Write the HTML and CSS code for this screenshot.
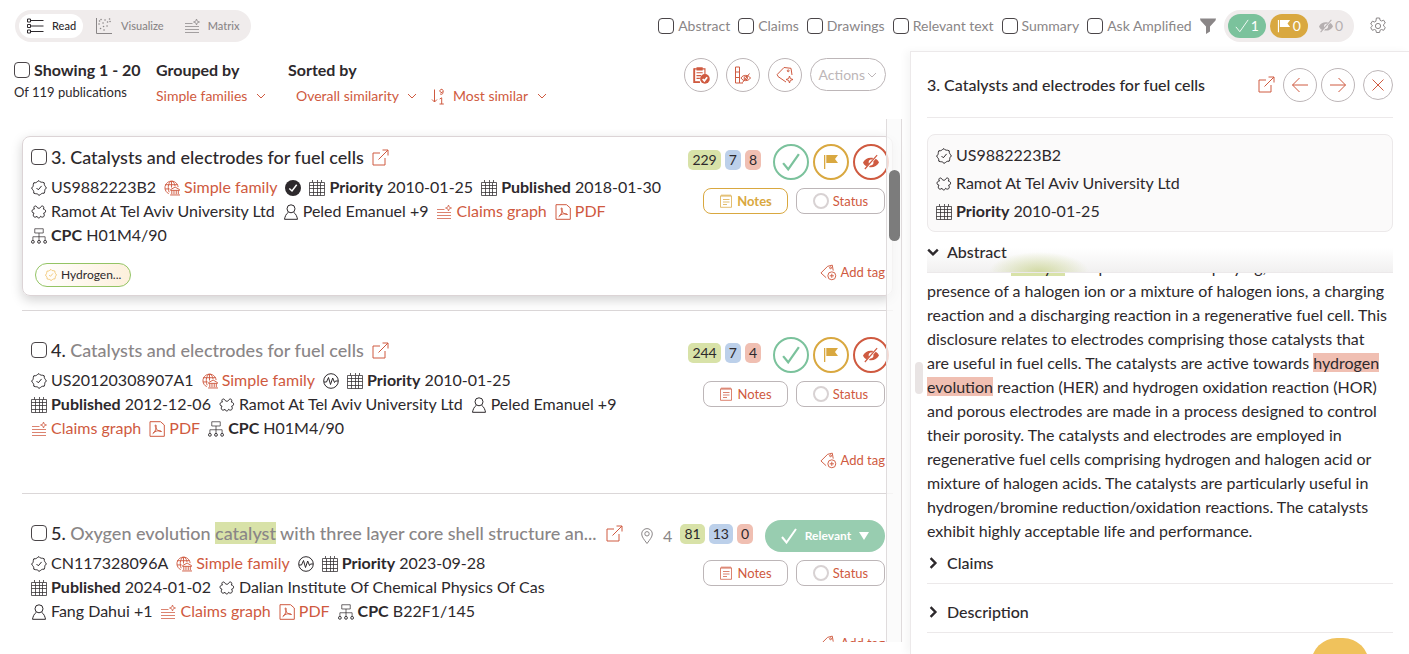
FILE: index.html
```html
<!DOCTYPE html>
<html lang="en">
<head>
    <meta charset="UTF-8">
    <meta name="viewport" content="width=device-width, initial-scale=1.0">
    <title>Publications</title>
    <link rel="stylesheet" href="styles.css">
</head>
<body>
    <!-- Icon sprite -->
    <svg class="sprite" aria-hidden="true">
        <symbol id="i-list" viewBox="0 0 18 18"><path d="M1.5 2h3v3h-3zM1.5 7.5h3v3h-3zM1.5 13h3v3h-3zM4.500 3.500H17.500M4.500 9H17.500M4.500 14.500H17.500"/></symbol>
        <symbol id="i-scatter" viewBox="0 0 18 18"><path d="M1.500 1V16.500H17"/><path class="dots" d="M6 2.500h.1M10 3h.1M14.500 2h.1M4 7h.1M8 6h.1M12.500 5h.1M5.500 11.500h.1M8.500 9.500h.1M12 9h.1M9 13h.1M15 4.500h.1M4.500 4h.1"/></symbol>
        <symbol id="i-matrix" viewBox="0 0 16 16"><path class="thin" d="M1 5.500H8.500M1 8.500H15M1 11.500H15M1 14.500H15M12.500 1L13.300 3.200L15.500 4L13.300 4.800L12.500 7L11.700 4.800L9.500 4L11.700 3.200Z"/></symbol>
        <symbol id="i-funnel" viewBox="0 0 16 16"><path class="solid" d="M0 .5H16L15.500 2.500L10 8.500V13.500L6 16V8.500L.5 2.500Z"/></symbol>
        <symbol id="i-check" viewBox="0 0 16 16"><path d="M1 9L5.500 14.500L15 1"/></symbol>
        <symbol id="i-flag" viewBox="0 0 16 16"><path class="solid" d="M1 1h1.300v14H1zM3.300 1H15L12 5L15 9H3.300z"/></symbol>
        <symbol id="i-hide" viewBox="0 0 16 16"><path class="solid" d="M0 8.500C2 4.500 6 3 10.300 4L9 5.500C6.500 4.800 5 7.500 6 9.300L3.300 12.300C1.800 11.500.7 10.200 0 8.500ZM12.700 4.700C14.200 5.500 15.300 6.800 16 8.500C14 12.200 10 14 5.800 13L7.200 11.400C9.700 11.800 11 9.500 10.300 7.500ZM13.700.7L14.600 1.500L2.300 15.400L1.400 14.600Z"/></symbol>
        <symbol id="i-gear" viewBox="0 0 18 18"><path d="M7.400 1h3.200l.5 2.300 1.300.7 2.300-.8 1.600 2.800-1.700 1.500v1.500l1.700 1.500-1.600 2.800-2.300-.8-1.300.7-.5 2.300H7.400l-.5-2.300-1.300-.7-2.300.8-1.600-2.800 1.700-1.500V8.500L1.700 7l1.600-2.800 2.300.8 1.300-.8z"/><circle cx="9" cy="9" r="2.600"/></symbol>
        <symbol id="i-clip" viewBox="0 0 16 16"><path d="M2 2.500H11.500V7.500M7 14.500H2V2.500M4 6h5.500M4 8.500h4M4 11h3"/><path class="solid" d="M4 1h5.500v3H4zM1.200 2h1.600v13H1.200zM2 13.600h5v1.400H2z"/><circle class="solid" cx="11.500" cy="11.500" r="4.300"/><path class="cut" d="M9.500 11.500l1.500 1.700 2.500-3.200"/></symbol>
        <symbol id="i-cols" viewBox="0 0 18 18"><path d="M1.500 1h4v16h-4zM1.500 6h4M1.500 11.500h4M5.500 17H9"/><path d="M7 12C9 8.500 14 8.500 16.500 12C14 15.500 9 15.500 7 12ZM15.500 7.500L8.500 16.500"/><circle cx="11.800" cy="12" r="1.700"/></symbol>
        <symbol id="i-tagnew" viewBox="0 0 18 18"><path d="M10 16L2 10.500L1.200 8.500L8 1.500L15 2.300L16 9"/><circle cx="12.200" cy="4.800" r=".9"/><path d="M13.500 10l.9 2.600 2.600.9-2.600.9-.9 2.600-.9-2.600-2.600-.9 2.600-.9z"/></symbol>
        <symbol id="i-down" viewBox="0 0 10 10"><path d="M1 3L5 7L9 3"/></symbol>
        <symbol id="i-sort" viewBox="0 0 14 18"><path d="M3.500 2.500V15M1 12.500L3.500 15L6 12.500"/><path d="M12 4.500a1.600 1.600 0 1 1 0-1.200V5.500a1.700 1.700 0 0 1-3 1.200M8.700 12l2-1.200V17M8.500 17h4.300"/></symbol>
        <symbol id="i-open" viewBox="0 0 17 17"><path d="M8 4H1V16H13V9M6.500 10.500L16 1M10.500 1H16V6.500"/></symbol>
        <symbol id="i-badge" viewBox="0 0 16 16"><path d="M8 .6Q9.300 2.400 10.300 2.200T13.200 2.800Q13.200 5 13.800 5.700T15.400 8Q13.700 9.400 13.800 10.300T13.200 13.200Q11 13.100 10.300 13.800T8 15.400Q6.600 13.700 5.700 13.800T2.800 13.200Q2.900 11 2.200 10.300T.6 8Q2.300 6.600 2.200 5.700T2.800 2.800Q5 2.900 5.700 2.200T8 .6Z"/><path d="M5.500 8L7.300 9.800L10.600 5.900"/></symbol>
        <symbol id="i-family" viewBox="0 0 17 17"><path d="M5 14.500A7 7 0 1 1 15 7.500M1.200 5H14.500M1 9.500H6M7.500 1C4 4 4 9 5.500 13M8.500 1C11 3 11.500 4.500 11.700 6.500M8 1V8"/><path d="M7 10.200L11.800 7.500L16.500 10.200V11H7ZM8.300 11v4M10.600 11v4M13 11v4M15.200 11v4M6.500 15.900H17"/></symbol>
        <symbol id="i-granted" viewBox="0 0 16 16"><circle class="solid" cx="8" cy="8" r="8"/><path class="cut" d="M4.300 8.500L7 11L11.700 4.800"/></symbol>
        <symbol id="i-pulse" viewBox="0 0 16 16"><circle cx="8" cy="8" r="7.300"/><path d="M1 9H3.500L5.500 4.500L7.500 11.500L9.700 5L11.500 9.500L12.500 8H15"/></symbol>
        <symbol id="i-cal" viewBox="0 0 16 16"><path class="thin" d="M.5 2.500h15v13h-15zM.5 5.500h15M.5 8.500h15M.5 12.500h15M4.500 3v12.500M8.500 3v12.500M11.500 3v12.500M3.500 0v2.500M8.500 0v2.500M12.500 0v2.500"/></symbol>
        <symbol id="i-org" viewBox="0 0 16 16"><path d="M6.200 3.500C5 .5 1.500 2.500 3.500 5C.3 5 .3 9 3 9.200C1 12 3.500 14.500 6 12.300C6.500 14.500 9 14.500 9.500 12.300C12 14.500 14.500 12 12.600 9.200C15.400 9 15.200 5 12.200 5C14.200 2.500 10.700.5 9.500 3.500C8.700 4.500 7 4.500 6.200 3.500Z"/></symbol>
        <symbol id="i-person" viewBox="0 0 16 16"><circle cx="8" cy="4.800" r="4"/><path d="M5.300 8.300C3 10 2 12.500 1.500 15.300H14.500C14 12.500 13 10 10.700 8.300"/></symbol>
        <symbol id="i-pdf" viewBox="0 0 16 16"><path d="M1 .7H11.500L15.300 4V15.300H1ZM3.800 12.500C6.500 10.500 7.600 7.500 7 4C6 3.500 6 5 6.700 6.500C7.700 9 9.500 10.500 12.500 10.500C11 9 6.500 9.500 3.800 12.500Z"/></symbol>
        <symbol id="i-cpc" viewBox="0 0 17 17"><path class="thin" d="M4 .8h9v4.500H4zM8.500 5.300V13M2 13V9.300h13V13"/><circle cx="2" cy="14.700" r="1.500"/><circle cx="8.500" cy="14.700" r="1.500"/><circle cx="15" cy="14.700" r="1.500"/></symbol>
        <symbol id="i-notes" viewBox="0 0 14 14"><path class="thin" d="M1.500 1.800h11v11.500h-11zM3 .3v2.500M5 .3v2.500M7 .3v2.500M9 .3v2.500M11 .3v2.500M4 5.500h6.500M4 8h6.500M4 10.500h4"/></symbol>
        <symbol id="i-tagadd" viewBox="0 0 18 18"><path d="M6.500 14.500L1 9.500L8 2.500L13 1.200L14 7"/><circle cx="11.200" cy="4" r="1"/><circle cx="12.500" cy="12.500" r="4.200"/><path d="M12.500 10.300v4.400M10.300 12.500h4.400"/></symbol>
        <symbol id="i-pin" viewBox="0 0 14 16"><path d="M7 15.500C4 11.500 1.700 8.800 1.700 5.900a5.300 5.300 0 0 1 10.600 0C12.300 8.800 10 11.500 7 15.500Z"/><circle cx="7" cy="5.800" r="2.200"/></symbol>
        <symbol id="i-left" viewBox="0 0 18 18"><path d="M17 9H1.500M8.500 2L1.500 9L8.500 16"/></symbol>
        <symbol id="i-right" viewBox="0 0 18 18"><path d="M1 9H16.500M9.500 2L16.500 9L9.500 16"/></symbol>
        <symbol id="i-close" viewBox="0 0 14 14"><path d="M1.500 1.500L12.500 12.500M12.500 1.500L1.500 12.500"/></symbol>
    </svg>

    <header class="topbar">
        <nav class="views">
            <button class="view active"><svg class="icon i18"><use href="#i-list"/></svg>Read</button>
            <button class="view"><svg class="icon i18"><use href="#i-scatter"/></svg>Visualize</button>
            <button class="view"><svg class="icon i16"><use href="#i-matrix"/></svg>Matrix</button>
        </nav>
        <div class="filters">
            <label class="check"><input type="checkbox">Abstract</label>
            <label class="check"><input type="checkbox">Claims</label>
            <label class="check"><input type="checkbox">Drawings</label>
            <label class="check"><input type="checkbox">Relevant text</label>
            <label class="check"><input type="checkbox">Summary</label>
            <label class="check"><input type="checkbox">Ask Amplified</label>
            <button class="plain" aria-label="Filter"><svg class="icon i16"><use href="#i-funnel"/></svg></button>
        </div>
        <div class="counters">
            <button class="counter green"><svg class="icon i14"><use href="#i-check"/></svg>1</button>
            <button class="counter gold"><svg class="icon i14"><use href="#i-flag"/></svg>0</button>
            <button class="counter"><svg class="icon i14"><use href="#i-hide"/></svg>0</button>
        </div>
        <button class="plain" aria-label="Settings"><svg class="icon i18"><use href="#i-gear"/></svg></button>
    </header>

    <main class="layout">
        <section class="results">
            <div class="toolbar">
                <div class="group showing">
                    <label class="group-title"><input type="checkbox">Showing 1 - 20</label>
                    <span class="total">Of 119 publications</span>
                </div>
                <div class="group">
                    <label class="group-title" for="group-by">Grouped by</label>
                    <span class="picker">
                        <select id="group-by"><option>Simple families</option></select>
                        <svg class="icon i10"><use href="#i-down"/></svg>
                    </span>
                </div>
                <div class="group sorted">
                    <label class="group-title" for="sort-by">Sorted by</label>
                    <div class="pickers">
                        <span class="picker">
                            <select id="sort-by"><option>Overall similarity</option></select>
                            <svg class="icon i10"><use href="#i-down"/></svg>
                        </span>
                        <span class="picker">
                            <svg class="icon sort"><use href="#i-sort"/></svg>
                            <select aria-label="Sort order"><option>Most similar</option></select>
                            <svg class="icon i10"><use href="#i-down"/></svg>
                        </span>
                    </div>
                </div>
                <div class="tools">
                    <button class="round" aria-label="Review"><svg class="icon i18"><use href="#i-clip"/></svg></button>
                    <button class="round" aria-label="Columns"><svg class="icon i18"><use href="#i-cols"/></svg></button>
                    <button class="round" aria-label="New tag"><svg class="icon i18"><use href="#i-tagnew"/></svg></button>
                    <button class="actions">Actions<svg class="icon i10"><use href="#i-down"/></svg></button>
                </div>
            </div>

            <div class="list-wrap">
                <ul class="list">
                    <li class="row">
                        <article class="card selected">
                            <div class="info">
                                <h2 class="title"><input type="checkbox" aria-label="Select 3"><span class="title-text">3. Catalysts and electrodes for fuel cells</span><a href="#" aria-label="Open"><svg class="icon i17"><use href="#i-open"/></svg></a></h2>
                                <div class="meta">
                                    <span><svg class="icon i16"><use href="#i-badge"/></svg>US9882223B2</span>
                                    <a href="#"><svg class="icon i16"><use href="#i-family"/></svg>Simple family</a>
                                    <span class="state"><svg class="icon i16"><use href="#i-granted"/></svg></span>
                                    <span><svg class="icon i16"><use href="#i-cal"/></svg><b>Priority</b> 2010-01-25</span>
                                    <span><svg class="icon i16"><use href="#i-cal"/></svg><b>Published</b> 2018-01-30</span>
                                    <span><svg class="icon i16"><use href="#i-org"/></svg>Ramot At Tel Aviv University Ltd</span>
                                    <span><svg class="icon i16"><use href="#i-person"/></svg>Peled Emanuel +9</span>
                                    <a href="#"><svg class="icon i16"><use href="#i-matrix"/></svg>Claims graph</a>
                                    <a href="#"><svg class="icon i16"><use href="#i-pdf"/></svg>PDF</a>
                                    <span><svg class="icon i16"><use href="#i-cpc"/></svg><b>CPC</b> H01M4/90</span>
                                </div>
                            </div>
                            <div class="side">
                                <div class="marks">
                                    <div class="badges"><span class="badge lime">229</span><span class="badge blue">7</span><span class="badge rose">8</span></div>
                                    <div class="votes">
                                        <button class="vote green" aria-label="Relevant"><svg class="icon i18"><use href="#i-check"/></svg></button>
                                        <button class="vote gold" aria-label="Flag"><svg class="icon i16"><use href="#i-flag"/></svg></button>
                                        <button class="vote red" aria-label="Hide"><svg class="icon i16"><use href="#i-hide"/></svg></button>
                                    </div>
                                </div>
                                <div class="buttons">
                                    <button class="box noted"><svg class="icon i14"><use href="#i-notes"/></svg>Notes</button>
                                    <button class="box"><i class="ring"></i>Status</button>
                                </div>
                            </div>
                            <div class="tags">
                                <span class="tag"><svg class="icon i12"><use href="#i-badge"/></svg>Hydrogen...</span>
                                <button class="add"><svg class="icon i17"><use href="#i-tagadd"/></svg>Add tag</button>
                            </div>
                        </article>
                    </li>
                    <li class="row">
                        <article class="card">
                            <div class="info">
                                <h2 class="title"><input type="checkbox" aria-label="Select 4"><span class="title-text">4. <span class="name">Catalysts and electrodes for fuel cells</span></span><a href="#" aria-label="Open"><svg class="icon i17"><use href="#i-open"/></svg></a></h2>
                                <div class="meta">
                                    <span><svg class="icon i16"><use href="#i-badge"/></svg>US20120308907A1</span>
                                    <a href="#"><svg class="icon i16"><use href="#i-family"/></svg>Simple family</a>
                                    <span class="state"><svg class="icon i16"><use href="#i-pulse"/></svg></span>
                                    <span><svg class="icon i16"><use href="#i-cal"/></svg><b>Priority</b> 2010-01-25</span>
                                    <span><svg class="icon i16"><use href="#i-cal"/></svg><b>Published</b> 2012-12-06</span>
                                    <span><svg class="icon i16"><use href="#i-org"/></svg>Ramot At Tel Aviv University Ltd</span>
                                    <span><svg class="icon i16"><use href="#i-person"/></svg>Peled Emanuel +9</span>
                                    <a href="#"><svg class="icon i16"><use href="#i-matrix"/></svg>Claims graph</a>
                                    <a href="#"><svg class="icon i16"><use href="#i-pdf"/></svg>PDF</a>
                                    <span><svg class="icon i16"><use href="#i-cpc"/></svg><b>CPC</b> H01M4/90</span>
                                </div>
                            </div>
                            <div class="side">
                                <div class="marks">
                                    <div class="badges"><span class="badge lime">244</span><span class="badge blue">7</span><span class="badge rose">4</span></div>
                                    <div class="votes">
                                        <button class="vote green" aria-label="Relevant"><svg class="icon i18"><use href="#i-check"/></svg></button>
                                        <button class="vote gold" aria-label="Flag"><svg class="icon i16"><use href="#i-flag"/></svg></button>
                                        <button class="vote red" aria-label="Hide"><svg class="icon i16"><use href="#i-hide"/></svg></button>
                                    </div>
                                </div>
                                <div class="buttons">
                                    <button class="box"><svg class="icon i14"><use href="#i-notes"/></svg>Notes</button>
                                    <button class="box"><i class="ring"></i>Status</button>
                                </div>
                            </div>
                            <div class="tags">
                                <button class="add"><svg class="icon i17"><use href="#i-tagadd"/></svg>Add tag</button>
                            </div>
                        </article>
                    </li>
                    <li class="row">
                        <article class="card">
                            <div class="info">
                                <h2 class="title"><input type="checkbox" aria-label="Select 5"><span class="title-text">5. <span class="name">Oxygen evolution <mark class="lime">catalyst</mark> with three layer core shell structure an...</span></span><a class="far" href="#" aria-label="Open"><svg class="icon i17"><use href="#i-open"/></svg></a></h2>
                                <div class="meta">
                                    <span><svg class="icon i16"><use href="#i-badge"/></svg>CN117328096A</span>
                                    <a href="#"><svg class="icon i16"><use href="#i-family"/></svg>Simple family</a>
                                    <span class="state"><svg class="icon i16"><use href="#i-pulse"/></svg></span>
                                    <span><svg class="icon i16"><use href="#i-cal"/></svg><b>Priority</b> 2023-09-28</span>
                                    <span><svg class="icon i16"><use href="#i-cal"/></svg><b>Published</b> 2024-01-02</span>
                                    <span><svg class="icon i16"><use href="#i-org"/></svg>Dalian Institute Of Chemical Physics Of Cas</span>
                                    <span><svg class="icon i16"><use href="#i-person"/></svg>Fang Dahui +1</span>
                                    <a href="#"><svg class="icon i16"><use href="#i-matrix"/></svg>Claims graph</a>
                                    <a href="#"><svg class="icon i16"><use href="#i-pdf"/></svg>PDF</a>
                                    <span><svg class="icon i16"><use href="#i-cpc"/></svg><b>CPC</b> B22F1/145</span>
                                </div>
                            </div>
                            <div class="side">
                                <div class="marks">
                                    <span class="cited"><svg class="icon i16"><use href="#i-pin"/></svg>4</span>
                                    <div class="badges"><span class="badge lime">81</span><span class="badge blue">13</span><span class="badge rose">0</span></div>
                                    <button class="relevant"><svg class="icon i16"><use href="#i-check"/></svg>Relevant<span class="caret"></span></button>
                                </div>
                                <div class="buttons">
                                    <button class="box"><svg class="icon i14"><use href="#i-notes"/></svg>Notes</button>
                                    <button class="box"><i class="ring"></i>Status</button>
                                </div>
                            </div>
                            <div class="tags">
                                <button class="add"><svg class="icon i17"><use href="#i-tagadd"/></svg>Add tag</button>
                            </div>
                        </article>
                    </li>
                </ul>
                <div class="track"><div class="thumb"></div></div>
            </div>
        </section>

        <aside class="panel">
            <div class="handle"></div>
            <div class="panel-head">
                <h2>3. Catalysts and electrodes for fuel cells</h2>
                <a href="#" aria-label="Open"><svg class="icon i17"><use href="#i-open"/></svg></a>
                <div class="panel-nav">
                    <button class="round" aria-label="Previous"><svg class="icon i18"><use href="#i-left"/></svg></button>
                    <button class="round" aria-label="Next"><svg class="icon i18"><use href="#i-right"/></svg></button>
                    <button class="round close" aria-label="Close"><svg class="icon i14"><use href="#i-close"/></svg></button>
                </div>
            </div>
            <div class="summary">
                <span><svg class="icon i16"><use href="#i-badge"/></svg>US9882223B2</span>
                <span><svg class="icon i16"><use href="#i-org"/></svg>Ramot At Tel Aviv University Ltd</span>
                <span><svg class="icon i16"><use href="#i-cal"/></svg><b>Priority</b> 2010-01-25</span>
            </div>
            <h3 class="fold open"><button><svg class="icon i12"><use href="#i-down"/></svg>Abstract</button></h3>
            <div class="abstract">
                <p>This relates <mark class="lime">catalyst</mark> compositions for employing, in the<br>presence of a halogen ion or a mixture of halogen ions, a charging reaction and a discharging reaction in a regenerative fuel cell. This disclosure relates to electrodes comprising those catalysts that are useful in fuel cells. The catalysts are active towards <mark class="rose">hydrogen evolution</mark> reaction (HER) and hydrogen oxidation reaction (HOR) and porous electrodes are made in a process designed to control their porosity. The catalysts and electrodes are employed in regenerative fuel cells comprising hydrogen and halogen acid or mixture of halogen acids. The catalysts are particularly useful in hydrogen/bromine reduction/oxidation reactions. The catalysts exhibit highly acceptable life and performance.</p>
            </div>
            <h3 class="fold"><button><svg class="icon i12"><use href="#i-down"/></svg>Claims</button></h3>
            <h3 class="fold"><button><svg class="icon i12"><use href="#i-down"/></svg>Description</button></h3>
            <button class="chat" aria-label="Chat"></button>
        </aside>
    </main>
</body>
</html>
```
FILE: styles.css
```css
* {
    margin: 0;
    padding: 0;
    box-sizing: border-box;
}

body {
    font-family: Lato, 'Liberation Sans', sans-serif;
    font-size: 16px;
    line-height: 24px;
    color: #2d292c;
    background: #fff;
    height: 100vh;
    display: flex;
    flex-direction: column;
    overflow: hidden;
}

button, select, input {
    font: inherit;
    color: inherit;
    background: none;
    border: none;
}

button {
    display: flex;
    align-items: center;
    justify-content: center;
    cursor: pointer;
}

a {
    color: #cf5a40;
    text-decoration: none;
}

ul {
    list-style: none;
}

input[type="checkbox"] {
    appearance: none;
    width: 16px;
    height: 16px;
    flex: none;
    border: 1px solid #4a4548;
    border-radius: 4px;
}

mark {
    color: inherit;
}

.lime {
    background: #d8e2a8;
}

.blue {
    background: #bcd0ea;
}

.rose {
    background: #f0bfb2;
}

/* Icons */
.sprite {
    position: absolute;
    width: 0;
    height: 0;
}

.icon {
    flex: none;
    fill: none;
    stroke: currentColor;
    stroke-width: 1;
}

.solid {
    fill: currentColor;
    stroke: none;
}

.thin {
    stroke-opacity: 0.75;
}

.cut {
    stroke: #fff;
    stroke-width: 1.5;
}

.dots {
    stroke-width: 1.5;
    stroke-linecap: round;
}

.i10 { width: 10px; height: 10px; }
.i12 { width: 12px; height: 12px; }
.i14 { width: 14px; height: 14px; }
.i16 { width: 16px; height: 16px; }
.i17 { width: 17px; height: 17px; }
.i18 { width: 18px; height: 18px; }

.sort {
    width: 14px;
    height: 18px;
}

/* Top bar */
.topbar {
    display: flex;
    align-items: center;
    height: 51px;
    flex: none;
    padding: 0 22px 0 15px;
    color: #8a8687;
}

.views, .counters {
    display: flex;
    align-items: center;
    gap: 4px;
    height: 32px;
    padding: 4px;
    border-radius: 16px;
    background: #f0ecec;
}

.view {
    height: 24px;
    gap: 8px;
    padding: 0 8px;
    border-radius: 12px;
    font-size: 11px;
    font-weight: 500;
}

.view.active {
    padding: 0 7px;
    background: #fff;
    color: #2d292c;
}

.filters {
    display: flex;
    align-items: center;
    gap: 8px;
    margin-left: auto;
    font-size: 14px;
}

.check {
    display: flex;
    align-items: center;
    gap: 4px;
}

.counters {
    margin: 0 15px 0 8px;
    color: #b5afb0;
}

.counter {
    height: 24px;
    gap: 2px;
    padding: 0 7px;
    border-radius: 12px;
    font-size: 14px;
}

.counter.green {
    background: #7bc29c;
    color: #fff;
}

.counter.gold {
    background: #d9a840;
    color: #fff;
}

/* Layout */
.layout {
    flex: 1;
    min-height: 0;
    display: grid;
    grid-template-columns: minmax(0, 1fr) 499px;
}

.results {
    display: flex;
    flex-direction: column;
    min-height: 0;
    padding-bottom: 12px;
}

.toolbar {
    display: flex;
    flex: none;
    height: 68px;
    padding: 7px 24px 0 14px;
}

.group {
    display: flex;
    flex-direction: column;
    align-items: flex-start;
    margin-right: 22px;
    font-size: 14px;
}

.showing {
    width: 128px;
    margin-right: 14px;
    font-size: 13px;
}

.group-title {
    display: flex;
    align-items: center;
    gap: 4px;
    font-size: 16px;
    font-weight: bold;
    white-space: nowrap;
}

.total {
    line-height: 20px;
}

.picker {
    display: flex;
    align-items: center;
    gap: 8px;
    height: 28px;
    color: #cf5a40;
}

.picker select {
    appearance: none;
}

.pickers {
    display: flex;
    gap: 14px;
    padding-left: 8px;
}

.tools {
    display: flex;
    align-items: flex-start;
    gap: 8px;
    margin-left: auto;
}

.round {
    width: 34px;
    height: 34px;
    border: 1px solid #bdb6b8;
    border-radius: 50%;
    color: #cf5a40;
}

.actions {
    height: 33px;
    gap: 2px;
    padding: 0 8px;
    border: 1px solid #bdb6b8;
    border-radius: 17px;
    font-size: 14px;
    color: #bdb6b8;
}

/* List */
.list-wrap {
    position: relative;
    flex: 1;
    min-height: 0;
    overflow: hidden;
}

.list {
    padding: 0 17px 0 22px;
}

.row {
    padding: 18px 0 14px;
    border-bottom: 1px solid #dbd7d8;
}

.row:first-child {
    padding-top: 17px;
}

.card {
    display: grid;
    grid-template-columns: minmax(0, 1fr) auto;
    padding: 7px 7px 0 8px;
    border: 1px solid transparent;
    border-radius: 8px;
}

.card.selected {
    border-color: #dcd4d6;
    box-shadow: 0 4px 12px rgba(0, 0, 0, 0.18);
}

.title {
    display: flex;
    align-items: center;
    gap: 4px;
    margin: 1px 0 6px;
    font-size: 18px;
    font-weight: 500;
    white-space: nowrap;
}

.title a {
    display: flex;
    margin-left: 4px;
}

.title .far {
    margin: 0 16px 0 auto;
}

.name {
    color: #8a8687;
}

.meta {
    display: flex;
    flex-wrap: wrap;
    column-gap: 8px;
}

.meta .icon, .summary .icon {
    margin-right: 4px;
    vertical-align: -3px;
}

.meta .state .icon {
    margin-right: 0;
}

.side {
    display: flex;
    flex-direction: column;
    align-items: flex-end;
    gap: 8px;
}

.marks {
    display: flex;
    align-items: center;
    gap: 12px;
    white-space: nowrap;
}

.badges {
    display: flex;
    gap: 4px;
    margin-bottom: 4px;
}

.badge {
    min-width: 16px;
    padding: 0 4px;
    border-radius: 5px;
    font-size: 14px;
    line-height: 20px;
    text-align: center;
}

.cited {
    display: flex;
    align-items: center;
    gap: 8px;
    margin-right: -4px;
    color: #8a8687;
}

.votes {
    display: flex;
    gap: 4px;
    margin-right: -4px;
}

.vote {
    width: 36px;
    height: 36px;
    border: 2px solid currentColor;
    border-radius: 50%;
}

.vote.green {
    background: none;
    color: #7bc29c;
}

.vote.gold {
    color: #d9a840;
}

.vote.red {
    color: #cf5a40;
}

.vote .i18, .relevant .icon {
    stroke-width: 2;
}

.relevant {
    width: 120px;
    height: 32px;
    gap: 8px;
    border-radius: 16px;
    background: #98cdb0;
    color: #fff;
    font-size: 12px;
    font-weight: bold;
}

.caret {
    border: 5px solid transparent;
    border-top: 8px solid #fff;
    border-bottom: 0;
}

.buttons {
    display: flex;
    gap: 8px;
}

.box {
    width: 89px;
    height: 26px;
    gap: 4px;
    border: 1px solid #bdb6b8;
    border-radius: 8px;
    color: #cf5a40;
    font-size: 13px;
}

.box:first-child {
    width: 85px;
}

.box.noted {
    border-color: #d9a840;
    color: #d9a840;
    font-weight: bold;
}

.ring {
    width: 16px;
    height: 16px;
    border: 2px solid #d8d2d3;
    border-radius: 50%;
}

.tags {
    grid-column: 1 / -1;
    display: flex;
    align-items: center;
    padding: 10px 0 8px;
}

.tag {
    display: flex;
    align-items: center;
    gap: 4px;
    height: 24px;
    margin: 6px 0 0 4px;
    padding: 0 9px;
    border: 1px solid #94c464;
    border-radius: 12px;
    background: linear-gradient(90deg, #fff, #fdf0dc);
    font-size: 12px;
}

.tag .icon {
    color: #efbb55;
}

.add {
    gap: 4px;
    margin-left: auto;
    font-size: 13px;
    line-height: 20px;
    color: #cf5a40;
}

/* Scrollbar over the list */
.track {
    position: absolute;
    top: 0;
    right: 8px;
    bottom: 0;
    width: 16px;
    border: solid #e0dcdd;
    border-width: 0 1px;
    background: rgba(250, 250, 250, 0.8);
}

.thumb {
    width: 11px;
    height: 71px;
    margin: 51px auto 0;
    border-radius: 6px;
    background: #7c7c7c;
}

/* Detail panel */
.panel {
    position: relative;
    padding: 0 16px;
    border: 1px solid #ece9ea;
    border-width: 1px 0 0 1px;
    box-shadow: -4px 0 8px rgba(0, 0, 0, 0.04);
    background: #fff;
    overflow: hidden;
}

.handle {
    position: absolute;
    top: 310px;
    left: 4px;
    width: 8px;
    height: 32px;
    border-radius: 4px;
    background: #e9e4e4;
}

.panel-head {
    display: flex;
    align-items: center;
    height: 66px;
    border-bottom: 1px solid #ece9ea;
}

.panel-head h2 {
    flex: 1;
    font-size: 16px;
    font-weight: 500;
}

.panel-head a {
    display: flex;
    margin-right: 8px;
}

.panel-nav {
    display: flex;
    align-items: center;
    gap: 4px;
}

.close {
    width: 30px;
    height: 30px;
    margin-left: 4px;
}

.summary {
    display: flex;
    flex-direction: column;
    margin-top: 16px;
    padding: 6px 8px;
    border: 1px solid #ece9ea;
    border-radius: 8px;
    background: #fbfafa;
    line-height: 28px;
}

/* The abstract is scrolled a little way under its heading */
.abstract {
    overflow: hidden;
}

.abstract p {
    margin-top: -18px;
    padding-right: 4px;
}

.fold {
    padding: 8px 0;
    border-bottom: 1px solid #ece9ea;
    font-size: 16px;
    font-weight: 500;
}

.fold.open {
    background:
        radial-gradient(ellipse 50px 20px at 112px 100%, rgba(196, 208, 130, 0.7), transparent),
        linear-gradient(#fff 40%, #f1f0f0);
}

.fold + .fold {
    padding-top: 16px;
}

.fold button {
    gap: 8px;
}

.fold .icon {
    stroke-width: 2;
    transform: rotate(-90deg);
}

.open .icon {
    transform: none;
}

.chat {
    position: absolute;
    right: 40px;
    bottom: -42px;
    width: 58px;
    height: 58px;
    border-radius: 26px;
    background: #f0c25c;
}
```
